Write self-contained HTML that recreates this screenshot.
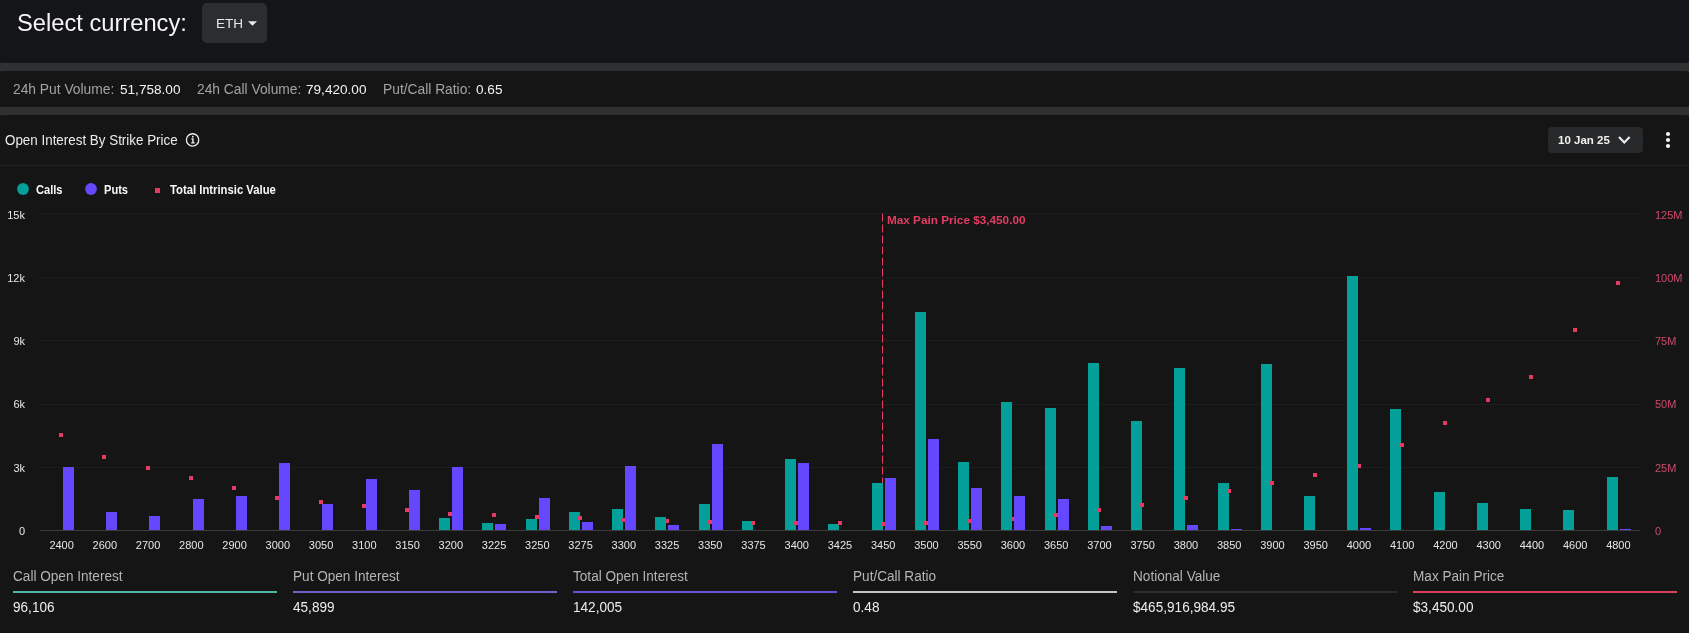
<!DOCTYPE html>
<html><head><meta charset="utf-8">
<style>
*{margin:0;padding:0;box-sizing:border-box}
body *{will-change:transform}
html,body{width:1689px;height:633px;overflow:hidden;background:#2f3032;font-family:"Liberation Sans",sans-serif}
.card{position:absolute;left:-4px;width:1697px;background:#151515}
.abs{position:absolute;white-space:nowrap}
#hdr{top:-10px;height:73px;border-radius:7px;background:#141518}
#stats{top:71px;height:36px;border-radius:7px}
#main{top:115px;height:530px;border-radius:7px}
.t{position:absolute;white-space:nowrap;line-height:1}
.lbl{color:#a3a3a3}
.val{color:#f2f2f2}
svg text{font-family:"Liberation Sans",sans-serif}
.ax{font-size:11px;fill:#e6e6e6}
.rax{font-size:11px;fill:#cf4a6c}
.mp{font-size:11.75px;font-weight:bold;fill:#e23d62}
</style></head><body>
<div class="card" id="hdr"></div>
<div class="card" id="stats"></div>
<div class="card" id="main"></div>

<!-- header -->
<div class="t" id="selcur" style="left:16.5px;top:12.4px;font-size:23.7px;color:#f5f5f5;transform:scaleY(1.045);transform-origin:0 20px">Select currency:</div>
<div class="abs" style="left:202px;top:3px;width:65px;height:40px;border-radius:5px;background:#2c2d2f"></div>
<div class="t" id="eth" style="left:216px;top:17.3px;font-size:13.6px;color:#e6e6e6">ETH</div>
<svg class="abs" style="left:247px;top:20px" width="12" height="8"><path d="M1 1.3 L10 1.3 L5.5 5.8 Z" fill="#eaeaea"/></svg>

<!-- stats -->
<div class="t" style="left:13px;top:83px;font-size:13.8px"><span class="lbl" id="s1">24h Put Volume:</span></div>
<div class="t val" style="left:119.5px;top:83.2px;font-size:13.6px" id="v1">51,758.00</div>
<div class="t lbl" style="left:197px;top:83px;font-size:13.8px" id="s2">24h Call Volume:</div>
<div class="t val" style="left:306px;top:83.2px;font-size:13.6px" id="v2">79,420.00</div>
<div class="t lbl" style="left:383px;top:83px;font-size:13.8px" id="s3">Put/Call Ratio:</div>
<div class="t val" style="left:476px;top:83.2px;font-size:13.6px" id="v3">0.65</div>

<!-- chart title -->
<div class="t" id="title" style="left:5px;top:133.8px;font-size:13.4px;color:#ececec;transform:scaleY(1.07);transform-origin:0 11.3px">Open Interest By Strike Price</div>
<svg class="abs" style="left:185px;top:132px" width="16" height="16"><circle cx="7.6" cy="7.9" r="6.15" fill="none" stroke="#ececec" stroke-width="1.3"/><path d="M6.4 6.3 H8.6 V10.3 H9.7 V11.6 H6.2 V10.3 H7.2 V7.5 H6.4 Z" fill="#ececec"/><circle cx="7.8" cy="4.7" r="0.9" fill="#ececec"/></svg>
<div class="abs" style="left:1548px;top:127px;width:95px;height:26px;border-radius:4px;background:#28292b"></div>
<div class="t" id="date" style="left:1557.5px;top:134.5px;font-size:11.5px;font-weight:bold;color:#f0f0f0">10 Jan 25</div>
<svg class="abs" style="left:1617px;top:134px" width="15" height="12"><path d="M2 3 L7.3 8.5 L12.6 3" fill="none" stroke="#f0f0f0" stroke-width="2"/></svg>
<svg class="abs" style="left:1664px;top:130px" width="8" height="20"><circle cx="4" cy="4" r="2.1" fill="#f2f2f2"/><circle cx="4" cy="10" r="2.1" fill="#f2f2f2"/><circle cx="4" cy="16" r="2.1" fill="#f2f2f2"/></svg>
<div class="abs" style="left:0;top:165px;width:1689px;height:1px;background:#222223"></div>

<!-- legend -->
<svg class="abs" style="left:16px;top:182px" width="14" height="14"><circle cx="7" cy="7" r="5.9" fill="#02a098"/></svg>
<div class="t" id="lg1" style="left:36px;top:185px;font-size:11.1px;font-weight:bold;color:#f8f8f8;transform:scaleY(1.1);transform-origin:0 9.4px">Calls</div>
<svg class="abs" style="left:84px;top:182px" width="14" height="14"><circle cx="7" cy="7" r="5.9" fill="#6548fe"/></svg>
<div class="t" id="lg2" style="left:104px;top:185px;font-size:11.1px;font-weight:bold;color:#f8f8f8;transform:scaleY(1.1);transform-origin:0 9.4px">Puts</div>
<div class="abs" style="left:154.5px;top:188px;width:4.5px;height:4.5px;background:#e53a62"></div>
<div class="t" id="lg3" style="left:170px;top:185px;font-size:11.3px;font-weight:bold;color:#f8f8f8;transform:scaleY(1.1);transform-origin:0 9.4px">Total Intrinsic Value</div>

<svg class="abs" style="left:0;top:0" width="1689" height="633">
<line x1="40.0" x2="1640.0" y1="213.50" y2="213.50" stroke="#1d1d1d" stroke-width="1"/>
<line x1="40.0" x2="1640.0" y1="277.50" y2="277.50" stroke="#1d1d1d" stroke-width="1"/>
<line x1="40.0" x2="1640.0" y1="340.50" y2="340.50" stroke="#1d1d1d" stroke-width="1"/>
<line x1="40.0" x2="1640.0" y1="404.50" y2="404.50" stroke="#1d1d1d" stroke-width="1"/>
<line x1="40.0" x2="1640.0" y1="467.50" y2="467.50" stroke="#1d1d1d" stroke-width="1"/>
<text x="25" y="218.5" text-anchor="end" class="ax">15k</text>
<text x="1655" y="218.5" class="rax">125M</text>
<text x="25" y="281.8" text-anchor="end" class="ax">12k</text>
<text x="1655" y="281.8" class="rax">100M</text>
<text x="25" y="345.1" text-anchor="end" class="ax">9k</text>
<text x="1655" y="345.1" class="rax">75M</text>
<text x="25" y="408.4" text-anchor="end" class="ax">6k</text>
<text x="1655" y="408.4" class="rax">50M</text>
<text x="25" y="471.7" text-anchor="end" class="ax">3k</text>
<text x="1655" y="471.7" class="rax">25M</text>
<text x="25" y="535.0" text-anchor="end" class="ax">0</text>
<text x="1655" y="535.0" class="rax">0</text>
<line x1="882.50" x2="882.50" y1="213.5" y2="530.0" stroke="#e53a62" stroke-width="1" stroke-dasharray="8 3"/>
<text x="887" y="224" class="mp">Max Pain Price $3,450.00</text>
<text x="61.62" y="549" text-anchor="middle" class="ax">2400</text>
<text x="104.86" y="549" text-anchor="middle" class="ax">2600</text>
<text x="148.11" y="549" text-anchor="middle" class="ax">2700</text>
<text x="191.35" y="549" text-anchor="middle" class="ax">2800</text>
<text x="234.59" y="549" text-anchor="middle" class="ax">2900</text>
<text x="277.84" y="549" text-anchor="middle" class="ax">3000</text>
<text x="321.08" y="549" text-anchor="middle" class="ax">3050</text>
<text x="364.32" y="549" text-anchor="middle" class="ax">3100</text>
<text x="407.57" y="549" text-anchor="middle" class="ax">3150</text>
<text x="450.81" y="549" text-anchor="middle" class="ax">3200</text>
<text x="494.05" y="549" text-anchor="middle" class="ax">3225</text>
<text x="537.30" y="549" text-anchor="middle" class="ax">3250</text>
<text x="580.54" y="549" text-anchor="middle" class="ax">3275</text>
<text x="623.78" y="549" text-anchor="middle" class="ax">3300</text>
<text x="667.03" y="549" text-anchor="middle" class="ax">3325</text>
<text x="710.27" y="549" text-anchor="middle" class="ax">3350</text>
<text x="753.51" y="549" text-anchor="middle" class="ax">3375</text>
<text x="796.76" y="549" text-anchor="middle" class="ax">3400</text>
<text x="840.00" y="549" text-anchor="middle" class="ax">3425</text>
<text x="883.24" y="549" text-anchor="middle" class="ax">3450</text>
<text x="926.49" y="549" text-anchor="middle" class="ax">3500</text>
<text x="969.73" y="549" text-anchor="middle" class="ax">3550</text>
<text x="1012.97" y="549" text-anchor="middle" class="ax">3600</text>
<text x="1056.22" y="549" text-anchor="middle" class="ax">3650</text>
<text x="1099.46" y="549" text-anchor="middle" class="ax">3700</text>
<text x="1142.70" y="549" text-anchor="middle" class="ax">3750</text>
<text x="1185.95" y="549" text-anchor="middle" class="ax">3800</text>
<text x="1229.19" y="549" text-anchor="middle" class="ax">3850</text>
<text x="1272.43" y="549" text-anchor="middle" class="ax">3900</text>
<text x="1315.68" y="549" text-anchor="middle" class="ax">3950</text>
<text x="1358.92" y="549" text-anchor="middle" class="ax">4000</text>
<text x="1402.16" y="549" text-anchor="middle" class="ax">4100</text>
<text x="1445.41" y="549" text-anchor="middle" class="ax">4200</text>
<text x="1488.65" y="549" text-anchor="middle" class="ax">4300</text>
<text x="1531.89" y="549" text-anchor="middle" class="ax">4400</text>
<text x="1575.14" y="549" text-anchor="middle" class="ax">4600</text>
<text x="1618.38" y="549" text-anchor="middle" class="ax">4800</text>
<g fill="#02a098"><rect x="439" y="518" width="11" height="12"/><rect x="482" y="523" width="11" height="7"/><rect x="526" y="519" width="11" height="11"/><rect x="569" y="512" width="11" height="18"/><rect x="612" y="509" width="11" height="21"/><rect x="655" y="517" width="11" height="13"/><rect x="699" y="504" width="11" height="26"/><rect x="742" y="521" width="11" height="9"/><rect x="785" y="459" width="11" height="71"/><rect x="828" y="524" width="11" height="6"/><rect x="872" y="483" width="11" height="47"/><rect x="915" y="312" width="11" height="218"/><rect x="958" y="462" width="11" height="68"/><rect x="1001" y="402" width="11" height="128"/><rect x="1045" y="408" width="11" height="122"/><rect x="1088" y="363" width="11" height="167"/><rect x="1131" y="421" width="11" height="109"/><rect x="1174" y="368" width="11" height="162"/><rect x="1218" y="483" width="11" height="47"/><rect x="1261" y="364" width="11" height="166"/><rect x="1304" y="496" width="11" height="34"/><rect x="1347" y="276" width="11" height="254"/><rect x="1390" y="409" width="11" height="121"/><rect x="1434" y="492" width="11" height="38"/><rect x="1477" y="503" width="11" height="27"/><rect x="1520" y="509" width="11" height="21"/><rect x="1563" y="510" width="11" height="20"/><rect x="1607" y="477" width="11" height="53"/></g>
<g fill="#e53a62"><rect x="59" y="433" width="4" height="4"/><rect x="102" y="455" width="4" height="4"/><rect x="146" y="466" width="4" height="4"/><rect x="189" y="476" width="4" height="4"/><rect x="232" y="486" width="4" height="4"/><rect x="275" y="496" width="4" height="4"/><rect x="319" y="500" width="4" height="4"/><rect x="362" y="504" width="4" height="4"/><rect x="405" y="508" width="4" height="4"/><rect x="448" y="512" width="4" height="4"/><rect x="492" y="513" width="4" height="4"/><rect x="535" y="515" width="4" height="4"/><rect x="578" y="516" width="4" height="4"/><rect x="621" y="518" width="4" height="4"/><rect x="665" y="519" width="4" height="4"/><rect x="708" y="520" width="4" height="4"/><rect x="751" y="521" width="4" height="4"/><rect x="794" y="521" width="4" height="4"/><rect x="838" y="521" width="4" height="4"/><rect x="881" y="522" width="4" height="4"/><rect x="924" y="521" width="4" height="4"/><rect x="967" y="519" width="4" height="4"/><rect x="1011" y="517" width="4" height="4"/><rect x="1054" y="513" width="4" height="4"/><rect x="1097" y="508" width="4" height="4"/><rect x="1140" y="503" width="4" height="4"/><rect x="1184" y="496" width="4" height="4"/><rect x="1227" y="489" width="4" height="4"/><rect x="1270" y="481" width="4" height="4"/><rect x="1313" y="473" width="4" height="4"/><rect x="1357" y="464" width="4" height="4"/><rect x="1400" y="443" width="4" height="4"/><rect x="1443" y="421" width="4" height="4"/><rect x="1486" y="398" width="4" height="4"/><rect x="1529" y="375" width="4" height="4"/><rect x="1573" y="328" width="4" height="4"/><rect x="1616" y="281" width="4" height="4"/></g>
<g fill="#6548fe"><rect x="63" y="467" width="11" height="63"/><rect x="106" y="512" width="11" height="18"/><rect x="149" y="516" width="11" height="14"/><rect x="193" y="499" width="11" height="31"/><rect x="236" y="496" width="11" height="34"/><rect x="279" y="463" width="11" height="67"/><rect x="322" y="504" width="11" height="26"/><rect x="366" y="479" width="11" height="51"/><rect x="409" y="490" width="11" height="40"/><rect x="452" y="467" width="11" height="63"/><rect x="495" y="524" width="11" height="6"/><rect x="539" y="498" width="11" height="32"/><rect x="582" y="522" width="11" height="8"/><rect x="625" y="466" width="11" height="64"/><rect x="668" y="525" width="11" height="5"/><rect x="712" y="444" width="11" height="86"/><rect x="798" y="463" width="11" height="67"/><rect x="885" y="478" width="11" height="52"/><rect x="928" y="439" width="11" height="91"/><rect x="971" y="488" width="11" height="42"/><rect x="1014" y="496" width="11" height="34"/><rect x="1058" y="499" width="11" height="31"/><rect x="1101" y="526" width="11" height="4"/><rect x="1187" y="525" width="11" height="5"/><rect x="1231" y="529" width="11" height="1"/><rect x="1360" y="528" width="11" height="2"/><rect x="1620" y="529" width="11" height="1"/></g>
<line x1="40.0" x2="1640.0" y1="530.5" y2="530.5" stroke="#3c3c3c" stroke-width="1"/>
</svg>

<!-- bottom stats -->
<div class="abs" style="left:13px;top:569.7px"><div class="t lbl2" id="b1">Call Open Interest</div></div>
<div class="abs" style="left:13px;top:591px;width:264px;height:2px;background:#4fb8a4"></div>
<div class="t" style="left:13px;top:600.5px;font-size:13.6px;color:#ededed;transform:scaleY(1.07);transform-origin:0 11.5px">96,106</div>

<div class="abs" style="left:293px;top:569.7px"><div class="t lbl2">Put Open Interest</div></div>
<div class="abs" style="left:293px;top:591px;width:264px;height:2px;background:#735fc8"></div>
<div class="t" style="left:293px;top:600.5px;font-size:13.6px;color:#ededed;transform:scaleY(1.07);transform-origin:0 11.5px">45,899</div>

<div class="abs" style="left:573px;top:569.7px"><div class="t lbl2">Total Open Interest</div></div>
<div class="abs" style="left:573px;top:591px;width:264px;height:2px;background:#6a52d8"></div>
<div class="t" style="left:573px;top:600.5px;font-size:13.6px;color:#ededed;transform:scaleY(1.07);transform-origin:0 11.5px">142,005</div>

<div class="abs" style="left:853px;top:569.7px"><div class="t lbl2">Put/Call Ratio</div></div>
<div class="abs" style="left:853px;top:591px;width:264px;height:2px;background:#c4c4c4"></div>
<div class="t" style="left:853px;top:600.5px;font-size:13.6px;color:#ededed;transform:scaleY(1.07);transform-origin:0 11.5px">0.48</div>

<div class="abs" style="left:1133px;top:569.7px"><div class="t lbl2">Notional Value</div></div>
<div class="abs" style="left:1133px;top:591px;width:264px;height:2px;background:#2c2c2c"></div>
<div class="t" style="left:1133px;top:600.5px;font-size:13.6px;color:#ededed;transform:scaleY(1.07);transform-origin:0 11.5px">$465,916,984.95</div>

<div class="abs" style="left:1413px;top:569.7px"><div class="t lbl2">Max Pain Price</div></div>
<div class="abs" style="left:1413px;top:591px;width:264px;height:2px;background:#d9405e"></div>
<div class="t" style="left:1413px;top:600.5px;font-size:13.6px;color:#ededed;transform:scaleY(1.07);transform-origin:0 11.5px">$3,450.00</div>
<style>.lbl2{font-size:13.6px;color:#b4b4b4;position:static;transform:scaleY(1.07);transform-origin:0 11.5px}</style>
</body></html>
